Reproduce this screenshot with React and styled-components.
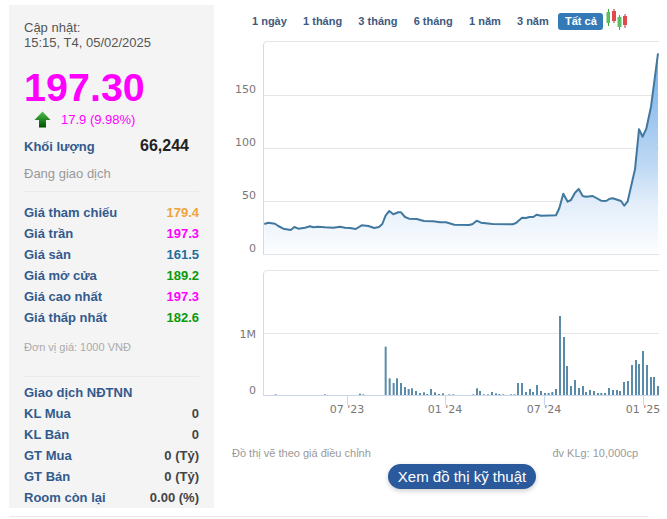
import styled, { createGlobalStyle } from "styled-components";

const Global = createGlobalStyle`
html, body {
    margin: 0;
    padding: 0;
    background: #fff;
    overflow: hidden;
    font-family: "Liberation Sans", Arial, sans-serif;
}
`

const Page = styled.div`
width: 667px;
height: 519px;
padding: 5px 0 0 9px;
box-sizing: border-box;
`

const Main = styled.div`
display: flex;
height: 503px;
`

const Side = styled.aside`
width: 205px;
height: 503px;
flex: none;
box-sizing: border-box;
padding: 15px 15px 0 15px;
background: #f4f4f5;
`

const Updated = styled.div`
font-size: 13px;
line-height: 15px;
color: #555;
`

const Price = styled.div`
margin-top: 15px;
font-size: 39.5px;
font-weight: 700;
line-height: 44px;
color: #ff00ff;
`

const Change = styled.div`
display: flex;
align-items: center;
gap: 10px;
height: 20px;
padding-left: 10px;
font-size: 13px;
color: #ff00ff;
`

const Volume = styled.div`
display: flex;
justify-content: space-between;
align-items: center;
height: 22px;
margin-top: 6px;
padding-right: 10px;
`

const VolumeLabel = styled.span`
font-size: 13px;
font-weight: 700;
color: #335a8c;
margin-top: 1px;
`

const VolumeValue = styled.span`
font-size: 16px;
font-weight: 700;
color: #222;
`

const Status = styled.div`
margin-top: 8px;
font-size: 13px;
line-height: 18px;
color: #999;
`

const Divider = styled.div`
height: 1px;
background: #eaeaea;
margin-top: ${(p) => p.$top}px;
`

const Rows = styled.div`
margin-top: ${(p) => p.$top}px;
`

const Row = styled.div`
display: flex;
justify-content: space-between;
height: 21px;
line-height: 21px;
font-size: 13px;
font-weight: 700;
color: #335a8c;
`

const Value = styled.span`
color: ${(p) => p.$color || "#444"};
`

const Note = styled.div`
margin-top: 12px;
font-size: 11px;
line-height: 14px;
color: #aaa;
`

const Content = styled.div`
width: 442px;
margin-left: 11px;
flex: none;
display: flex;
flex-direction: column;
`

const Tabs = styled.div`
display: flex;
align-items: center;
height: 18px;
margin-top: 7px;
padding-left: 27px;
`

const Tab = styled.span`
margin-right: ${(p) => (p.$active ? 3 : 16.2)}px;
margin-left: ${(p) => (p.$active ? -6.5 : 0)}px;
padding: ${(p) => (p.$active ? "0 6.5px" : "0")};
height: 17px;
line-height: 17px;
font-size: 11px;
font-weight: 700;
white-space: nowrap;
color: ${(p) => (p.$active ? "#fff" : "#3d5a80")};
background: ${(p) => (p.$active ? "#337ab7" : "transparent")};
border-radius: 3px;
`

const CandleIcon = styled.svg`
display: block;
margin-top: -3px;
`

const ChartSvg = styled.svg`
display: block;
margin-top: 8px;
flex: none;
`

const AxisText = styled.text`
font-family: "DejaVu Sans", sans-serif;
font-size: 11px;
fill: #777;
`

const Foot = styled.div`
display: flex;
justify-content: space-between;
width: 406px;
margin: 26px 0 0 7px;
font-size: 11px;
line-height: 14px;
color: #999;
`

const TechButton = styled.button`
display: block;
width: 148px;
height: 25px;
margin: 4px 0 0 163px;
padding: 0;
border: 0;
border-radius: 13px;
background: #2a5a9b;
color: #fff;
font-family: "Liberation Sans", Arial, sans-serif;
font-size: 15px;
line-height: 25px;
white-space: nowrap;
box-shadow: 0 2px 5px rgba(0, 0, 0, 0.2);
`

const BottomLine = styled.div`
width: 639px;
height: 1px;
margin-top: 8px;
background: #e9e9e9;
`

const quote = [
    ["Giá tham chiếu", "179.4", "#f0a33c"],
    ["Giá trần", "197.3", "#ff00ff"],
    ["Giá sàn", "161.5", "#1f6f9c"],
    ["Giá mở cửa", "189.2", "#0a9a0a"],
    ["Giá cao nhất", "197.3", "#ff00ff"],
    ["Giá thấp nhất", "182.6", "#0a9a0a"],
];

const foreign = [
    ["KL Mua", "0"],
    ["KL Bán", "0"],
    ["GT Mua", "0 (Tỷ)"],
    ["GT Bán", "0 (Tỷ)"],
    ["Room còn lại", "0.00 (%)"],
];

const tabs = ["1 ngày", "1 tháng", "3 tháng", "6 tháng", "1 năm", "3 năm"];

// svg origin is page (225,38) for the chart
const OX = 225;
const OY = 38;

const left = [[118,552],[130,548],[150,551],[160,558],[175,566],[197,570],[208,561],[220,566],[240,563],[255,559],[265,562],[278,560],[300,562],[325,563],[345,560],[360,563],[375,564],[392,567],[410,556],[430,558],[448,564],[462,561],[472,552],[482,526],[493,513],[505,523],[520,517],[528,517],[540,531],[552,536],[575,537],[597,543],[625,544],[645,547],[663,547]];
const right = [[25,554],[70,555],[80,552],[92,542],[105,548],[140,552],[200,553],[210,549],[228,533],[240,534],[250,531],[262,531],[272,524],[285,527],[330,526],[340,505],[352,461],[365,485],[375,480],[387,458],[398,447],[410,468],[420,470],[440,468],[465,482],[480,483],[492,476],[500,475],[525,483],[535,497],[545,484],[567,388],[579,268],[590,290],[601,266],[615,200],[636,40]];

const pricePts = [
    ...left.map(([x, y]) => [225 + x / 3 - OX, 40 + y / 3 - OY]),
    ...right.map(([x, y]) => [446 + x / 3 - OX, 40 + y / 3 - OY]),
];
const line = pricePts.map(([x, y]) => `${x.toFixed(1)},${y.toFixed(1)}`).join(" ");
const first = pricePts[0];
const last = pricePts[pricePts.length - 1];
const areaPts = `${first[0].toFixed(1)},216 ${line} ${last[0].toFixed(1)},216`;

const barsLeft = [[152,388],[300,388],[405,386],[415,388],[482,245],[494,340],[506,354],[516,340],[528,354],[540,366],[551,372],[561,370],[573,378],[585,384],[597,382],[607,387],[618,372],[630,382],[642,387],[654,385]];
const barsRight = [[10,388],[22,388],[82,388],[93,370],[102,378],[114,388],[126,388],[138,381],[150,385],[160,387],[172,388],[195,388],[206,388],[216,354],[228,354],[240,381],[252,372],[261,381],[273,360],[285,378],[297,384],[308,384],[319,381],[330,372],[342,153],[354,216],[363,303],[375,363],[387,345],[399,369],[411,363],[420,381],[432,375],[444,378],[456,384],[466,384],[477,384],[489,369],[501,375],[513,375],[522,378],[534,351],[546,348],[558,300],[570,285],[579,297],[591,258],[603,300],[615,336],[624,336],[636,363]];

const bars = [
    ...barsLeft.map(([x, y]) => [225 + x / 3 - OX, y]),
    ...barsRight.map(([x, y]) => [446 + x / 3 - OX, y]),
];

const priceTicks = [["150", 57], ["100", 110], ["50", 163], ["0", 216]];
const dateTicks = [["07 '23", 122], ["01 '24", 220], ["07 '24", 319], ["01 '25", 418]];

const UpArrow = () => (
    <svg width="17" height="17" viewBox="0 0 17 17">
        <defs>
            <linearGradient id="arrowFill" x1="0" y1="0" x2="0" y2="1">
                <stop offset="0" stopColor="#4fc04a" />
                <stop offset="1" stopColor="#004f00" />
            </linearGradient>
        </defs>
        <path d="M8.5 0.5 L16.5 9 L12 9 L12 16.5 L5 16.5 L5 9 L0.5 9 Z" fill="url(#arrowFill)" />
    </svg>
);

const Candles = () => (
    <CandleIcon width="22" height="21" viewBox="0 0 22 21">
        <path d="M2.5 0v17M13.5 6v15" stroke="#3fa343" strokeWidth="1" />
        <path d="M8 0v14M19 5v14" stroke="#b5383c" strokeWidth="1" />
        <rect x="0.5" y="3" width="3.5" height="11" fill="#5bbf5f" />
        <rect x="6" y="2" width="4" height="10" fill="#e0494e" />
        <rect x="11.5" y="8" width="4" height="10" fill="#5bbf5f" />
        <rect x="17" y="7" width="4" height="9" fill="#e0494e" />
    </CandleIcon>
);

const Chart = () => (
    <ChartSvg width="442" height="382" viewBox="0 0 442 382">
        <defs>
            <linearGradient id="areaFill" gradientUnits="userSpaceOnUse" x1="0" y1="15" x2="0" y2="216">
                <stop offset="0" stopColor="#74ace8" />
                <stop offset="0.55" stopColor="#bdd8f4" />
                <stop offset="0.75" stopColor="#e3eefa" />
                <stop offset="1" stopColor="#fdfeff" />
            </linearGradient>
        </defs>

        <path d="M38.5 216.5V7a3.5 3.5 0 0 1 3.5-3.5H434" fill="none" stroke="#e4e4e4" />
        <line x1="38.5" x2="38.5" y1="6" y2="216" stroke="#d5dbe6" />
        {priceTicks.slice(0, 3).map(([, y]) => (
            <line key={y} x1="39" x2="434" y1={y + 0.5} y2={y + 0.5} stroke="#e6e6e6" />
        ))}
        <line x1="38" x2="434" y1="216.5" y2="216.5" stroke="#e0e4ec" />
        {priceTicks.map(([label, y]) => (
            <AxisText key={label} x="31" y={y - 2} textAnchor="end">{label}</AxisText>
        ))}
        <polygon points={areaPts} fill="url(#areaFill)" />
        <polyline points={line} fill="none" stroke="#41789f" strokeWidth="2" strokeLinejoin="round" />

        <path d="M38.5 357V236a3.5 3.5 0 0 1 3.5-3.5H434" fill="none" stroke="#e4e4e4" />
        <line x1="38.5" x2="38.5" y1="235" y2="357" stroke="#d5dbe6" />
        <line x1="39" x2="434" y1="295.5" y2="295.5" stroke="#e6e6e6" />
        <line x1="38" x2="434" y1="357.5" y2="357.5" stroke="#ccd6eb" />
        <AxisText x="31" y="300" textAnchor="end">1M</AxisText>
        <AxisText x="31" y="356" textAnchor="end">0</AxisText>
        {bars.map(([x, y], idx) => (
            <rect key={idx} x={x - 1} y={265 + y / 3 - OY} width="2" height={357 - (265 + y / 3 - OY)} fill="#5a8ba8" />
        ))}
        {dateTicks.map(([label, x]) => (
            <g key={label}>
                <line x1={x + 0.5} x2={x + 0.5} y1="358" y2="367" stroke="#ccd6eb" />
                <AxisText x={x} y="375" textAnchor="middle">{label}</AxisText>
            </g>
        ))}
    </ChartSvg>
);

const App = () => {
    return (
        <Page>
            <Global />
            <Main>
                <Side>
                    <Updated>Cập nhật:<br />15:15, T4, 05/02/2025</Updated>
                    <Price>197.30</Price>
                    <Change>
                        <UpArrow />
                        <span>17.9 (9.98%)</span>
                    </Change>
                    <Volume>
                        <VolumeLabel>Khối lượng</VolumeLabel>
                        <VolumeValue>66,244</VolumeValue>
                    </Volume>
                    <Status>Đang giao dịch</Status>
                    <Divider $top={8} />
                    <Rows $top={10}>
                        {quote.map(([label, value, color]) => (
                            <Row key={label}>
                                <span>{label}</span>
                                <Value $color={color}>{value}</Value>
                            </Row>
                        ))}
                    </Rows>
                    <Note>Đơn vị giá: 1000 VNĐ</Note>
                    <Divider $top={22} />
                    <Rows $top={5}>
                        <Row>Giao dịch NĐTNN</Row>
                        {foreign.map(([label, value]) => (
                            <Row key={label}>
                                <span>{label}</span>
                                <Value>{value}</Value>
                            </Row>
                        ))}
                    </Rows>
                </Side>
                <Content>
                    <Tabs>
                        {tabs.map((itm) => <Tab key={itm}>{itm}</Tab>)}
                        <Tab $active>Tất cả</Tab>
                        <Candles />
                    </Tabs>
                    <Chart />
                    <Foot>
                        <span>Đồ thị vẽ theo giá điều chỉnh</span>
                        <span>đv KLg: 10,000cp</span>
                    </Foot>
                    <TechButton>Xem đồ thị kỹ thuật</TechButton>
                </Content>
            </Main>
            <BottomLine />
        </Page>
    );
}

export default App;
